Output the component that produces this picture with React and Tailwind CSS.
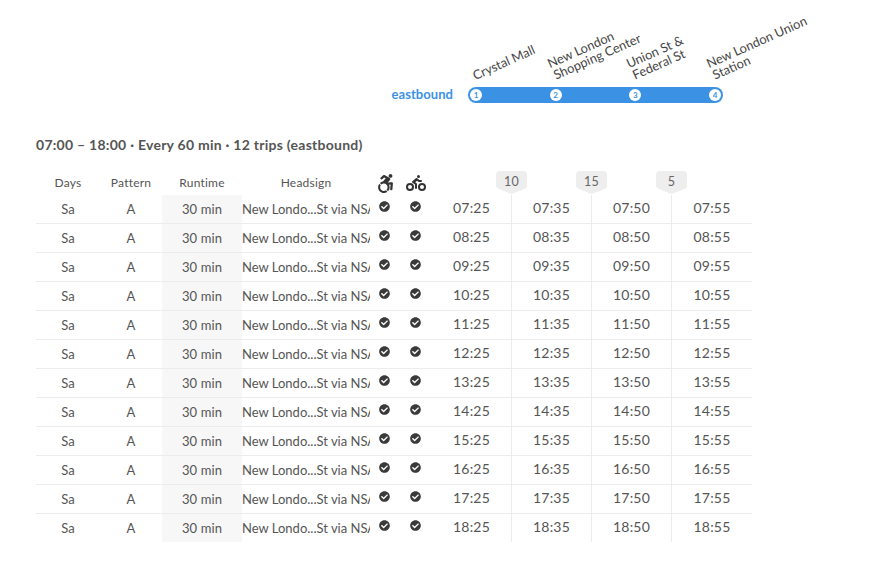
import React from 'react';
import { FaAccessibleIcon, FaBiking, FaCheckCircle } from 'react-icons/fa';

const stops = [
  { id: 1, lines: ['Crystal Mall'] },
  { id: 2, lines: ['New London', 'Shopping Center'] },
  { id: 3, lines: ['Union St &', 'Federal St'] },
  { id: 4, lines: ['New London Union', 'Station'] },
];

const offsets = [10, 15, 5];

const trips = [
  ['07:25', '07:35', '07:50', '07:55'],
  ['08:25', '08:35', '08:50', '08:55'],
  ['09:25', '09:35', '09:50', '09:55'],
  ['10:25', '10:35', '10:50', '10:55'],
  ['11:25', '11:35', '11:50', '11:55'],
  ['12:25', '12:35', '12:50', '12:55'],
  ['13:25', '13:35', '13:50', '13:55'],
  ['14:25', '14:35', '14:50', '14:55'],
  ['15:25', '15:35', '15:50', '15:55'],
  ['16:25', '16:35', '16:50', '16:55'],
  ['17:25', '17:35', '17:50', '17:55'],
  ['18:25', '18:35', '18:50', '18:55'],
];

const Row = ({ times, last }) => (
  <div className={`flex w-[716px] text-[13px] text-[#555] ${last ? 'h-[28px]' : 'h-[29px] border-b border-[#ececec]'}`}>
    <div className="w-16 pt-[5px] text-center">Sa</div>
    <div className="w-[62px] pt-[5px] text-center">A</div>
    <div className="w-20 bg-[#f7f7f7] pt-[5px] text-center tracking-[0.1px]">30 min</div>
    <div className="w-32 overflow-hidden whitespace-nowrap pt-[5px]">New Londo...St via NSA</div>
    <div className="w-[31px] pt-[6px]">
      <FaCheckCircle className="ml-[9px] h-[11px] w-[11px] text-[#3a3a3a]" />
    </div>
    <div className="w-[31px] pt-[6px]">
      <FaCheckCircle className="ml-[9px] h-[11px] w-[11px] text-[#3a3a3a]" />
    </div>
    {times.map((time, i) => (
      <div
        key={time}
        className={`w-20 pt-[3px] text-center text-sm tracking-[0.2px] ${i < 3 ? 'border-r border-[#ececec]' : ''}`}
      >
        {time}
      </div>
    ))}
  </div>
);

export default function App() {
  return (
    <div className="h-[564px] w-[892px] overflow-hidden bg-white pl-9 font-['Lato',sans-serif] text-[#555]">
      {/* Route diagram */}
      <div className="flex h-[87px] pl-[436px]">
        {stops.map((stop) => (
          <div key={stop.id} className="flex w-[79.5px] items-end">
            <div className="origin-bottom-left translate-x-[4px] -translate-y-[5px] -rotate-[24deg] whitespace-nowrap text-[12.8px] leading-[13px] text-[#444]">
              {stop.lines.map((line, i) => (
                <div key={line} className={i === 1 ? 'pl-[1px]' : ''}>{line}</div>
              ))}
            </div>
          </div>
        ))}
      </div>
      <div className="flex h-4 items-center">
        <div className="w-[417px] text-right text-[13px] font-bold tracking-[0.05px] text-[#3b92e4]">eastbound</div>
        <div className="ml-[15px] flex h-4 w-[255px] items-center justify-between rounded-full bg-[#3b92e4] px-0.5">
          {stops.map((stop) => (
            <div
              key={stop.id}
              className="flex h-3 w-3 items-center justify-center rounded-full bg-white text-[8px] font-bold text-[#3b92e4]"
            >
              {stop.id}
            </div>
          ))}
        </div>
      </div>

      <div className="mt-[32px] text-sm font-bold leading-5 tracking-[0.26px] text-[#555]">
        07:00 – 18:00 · Every 60 min · 12 trips (eastbound)
      </div>

      {/* Header */}
      <div className="mt-[16px] flex h-[24px] w-[716px] items-center text-xs tracking-[0.2px] text-[#555]">
        <div className="w-16 text-center">Days</div>
        <div className="w-[62px] text-center">Pattern</div>
        <div className="w-20 text-center">Runtime</div>
        <div className="w-32 text-center">Headsign</div>
        <div className="w-[31px]">
          <FaAccessibleIcon className="ml-[7px] h-[19px] w-[17px] text-[#333]" />
        </div>
        <div className="w-[31px]">
          <FaBiking className="ml-[5px] h-[20px] w-[20px] text-[#333]" />
        </div>
        <div className="w-20" />
        {offsets.map((offset) => (
          <div key={offset} className="w-20 self-start">
            <div className="ml-[-16px] flex h-[23px] w-[31px] items-center justify-center rounded-t-[4px] bg-[#eeeeee] pb-px text-[12.5px] text-[#666] [clip-path:polygon(0_0,100%_0,100%_68%,94%_76%,50%_100%,6%_76%,0_68%)]">
              {offset}
            </div>
          </div>
        ))}
      </div>

      {/* Trips */}
      <div className="flex flex-col">
        {trips.map((times, i) => (
          <Row key={times[0]} times={times} last={i === trips.length - 1} />
        ))}
      </div>
    </div>
  );
}
